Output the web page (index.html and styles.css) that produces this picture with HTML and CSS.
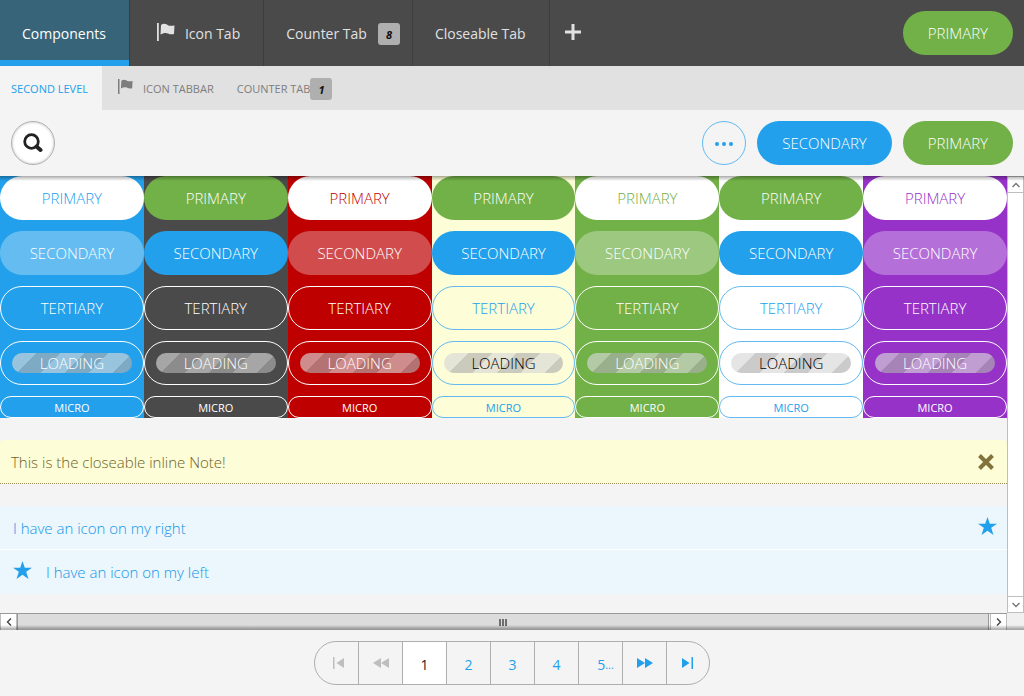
FILE: index.html
```html
<!DOCTYPE html>
<html lang="en">
<head>
<meta charset="utf-8">
<title>Components</title>
<link rel="stylesheet" href="styles.css">
</head>
<body>
<svg class="defs" aria-hidden="true">
  <symbol id="flag" viewBox="0 0 18 18"><path d="M0 0h1.800v18H0zM4 2C6 .5 8 .5 10 1.500 11 3 13 3 17.500 2.500L17 11c-2 .5-4 .5-6-.5-2-1-5-.5-7.500 1z"/></symbol>
  <symbol id="star" viewBox="0 0 20 19"><path d="M10 0l2.400 7H20l-6.100 4.400L16.300 19 10 14.500 3.700 19l2.400-7.600L0 7h7.600z"/></symbol>
  <symbol id="chevron" viewBox="0 0 8 8"><path d="M.5 6L4 2.500 7.500 6" fill="none" stroke="currentColor" stroke-width="1.400"/></symbol>
</svg>
<header class="topbar">
  <nav class="tabs">
    <a class="tab active" href="#components">Components</a>
    <a class="tab with-icon" href="#icon"><svg class="flag"><use href="#flag"/></svg>Icon Tab</a>
    <a class="tab with-count" href="#counter">Counter Tab<span class="count">8</span></a>
    <a class="tab" href="#closeable">Closeable Tab</a>
    <button class="add" aria-label="Add tab"><svg viewBox="0 0 16 16"><path d="M6.500 0h3v6.500H16v3H9.500V16h-3V9.500H0v-3h6.500z"/></svg></button>
  </nav>
  <button class="btn primary">PRIMARY</button>
</header>
<nav class="subtabs">
  <a class="subtab active" href="#second">SECOND LEVEL</a>
  <a class="subtab" href="#tabbar"><svg class="flag"><use href="#flag"/></svg>ICON TABBAR</a>
  <a class="subtab" href="#subcounter">COUNTER TAB<span class="count">1</span></a>
</nav>
<div class="toolbar">
  <button class="search" aria-label="Search"><svg viewBox="0 0 20 20"><circle cx="8.500" cy="8.500" r="6.800" fill="none" stroke="#222" stroke-width="2.800"/><path d="M13.500 13.500l4 3.500" stroke="#222" stroke-width="4" stroke-linecap="round"/></svg></button>
  <div class="actions">
    <button class="more" aria-label="More"><svg viewBox="0 0 18 4"><circle cx="2" cy="2" r="2"/><circle cx="9" cy="2" r="2"/><circle cx="16" cy="2" r="2"/></svg></button>
    <button class="btn secondary">SECONDARY</button>
    <button class="btn primary">PRIMARY</button>
  </div>
</div>
<div class="viewport">
  <main class="content">
    <div class="columns">
      <section class="column tinted blue"><button class="btn primary">PRIMARY</button><button class="btn secondary">SECONDARY</button><button class="btn tertiary">TERTIARY</button><button class="btn tertiary loading"><span>LOADING</span></button><button class="btn tertiary micro">MICRO</button></section>
      <section class="column dark"><button class="btn primary">PRIMARY</button><button class="btn secondary">SECONDARY</button><button class="btn tertiary">TERTIARY</button><button class="btn tertiary loading"><span>LOADING</span></button><button class="btn tertiary micro">MICRO</button></section>
      <section class="column tinted red"><button class="btn primary">PRIMARY</button><button class="btn secondary">SECONDARY</button><button class="btn tertiary">TERTIARY</button><button class="btn tertiary loading"><span>LOADING</span></button><button class="btn tertiary micro">MICRO</button></section>
      <section class="column yellow"><button class="btn primary">PRIMARY</button><button class="btn secondary">SECONDARY</button><button class="btn tertiary">TERTIARY</button><button class="btn tertiary loading"><span>LOADING</span></button><button class="btn tertiary micro">MICRO</button></section>
      <section class="column tinted green"><button class="btn primary">PRIMARY</button><button class="btn secondary">SECONDARY</button><button class="btn tertiary">TERTIARY</button><button class="btn tertiary loading"><span>LOADING</span></button><button class="btn tertiary micro">MICRO</button></section>
      <section class="column white"><button class="btn primary">PRIMARY</button><button class="btn secondary">SECONDARY</button><button class="btn tertiary">TERTIARY</button><button class="btn tertiary loading"><span>LOADING</span></button><button class="btn tertiary micro">MICRO</button></section>
      <section class="column tinted purple"><button class="btn primary">PRIMARY</button><button class="btn secondary">SECONDARY</button><button class="btn tertiary">TERTIARY</button><button class="btn tertiary loading"><span>LOADING</span></button><button class="btn tertiary micro">MICRO</button></section>
    </div>
    <div class="note">
      <p>This is the closeable inline Note!</p>
      <button class="close" aria-label="Close"><svg viewBox="0 0 16 16"><path d="M1.500 1.500l13 13M14.500 1.500l-13 13" stroke="currentColor" stroke-width="4"/></svg></button>
    </div>
    <div class="links">
      <a href="#right">I have an icon on my right<svg class="star end"><use href="#star"/></svg></a>
      <a href="#left"><svg class="star"><use href="#star"/></svg>I have an icon on my left</a>
    </div>
  </main>
  <div class="vbar">
    <button aria-label="Scroll up"><svg><use href="#chevron"/></svg></button>
    <button aria-label="Scroll down"><svg class="down"><use href="#chevron"/></svg></button>
  </div>
  <div class="hbar">
    <button aria-label="Scroll left"><svg class="left"><use href="#chevron"/></svg></button>
    <div class="thumb"><i></i><i></i><i></i></div>
    <button aria-label="Scroll right"><svg class="right"><use href="#chevron"/></svg></button>
  </div>
  <div class="corner"></div>
</div>
<footer class="footer">
  <nav class="pager">
    <button disabled aria-label="First"><svg viewBox="0 0 11 12"><path d="M0 0h1.500v12H0zM11 1v10L3.500 6z"/></svg></button>
    <button disabled aria-label="Back"><svg class="wide" viewBox="0 0 16 12"><path d="M8 1v10L0 6zM16 1v10L8 6z"/></svg></button>
    <button class="current">1</button>
    <button>2</button>
    <button>3</button>
    <button>4</button>
    <button class="last">5<small>...</small></button>
    <button aria-label="Forward"><svg class="wide" viewBox="0 0 16 12"><path d="M0 1v10l8-5zM8 1v10l8-5z"/></svg></button>
    <button aria-label="Last"><svg viewBox="0 0 11 12"><path d="M9.500 0H11v12H9.500zM0 1v10l7.500-5z"/></svg></button>
  </nav>
</footer>
</body>
</html>
```

FILE: styles.css
```css
* { box-sizing: border-box; }

body {
  margin: 0;
  height: 100vh;
  display: flex;
  flex-direction: column;
  background: #f4f4f4;
  font: 300 15px/22px "Open Sans", "Noto Sans", sans-serif;
}

button { font: inherit; margin: 0; padding: 0; border: 0; background: none; cursor: pointer; }
a { text-decoration: none; }
p { margin: 0; }
svg { display: block; fill: currentColor; flex: none; }
.defs { position: absolute; width: 0; height: 0; }

.topbar {
  flex: none;
  display: flex;
  align-items: center;
  justify-content: space-between;
  height: 66px;
  padding-right: 11px;
  background: #4a4a4a;
}
.tabs { display: flex; height: 66px; font-size: 14px; line-height: 24px; font-weight: 400; }
.tab {
  display: flex;
  align-items: center;
  padding: 2px 23px 0 22px;
  border-right: 1px solid #3d3d3d;
  color: #e1e1e1;
}
.tab.active { color: #fff; background: #376478; box-shadow: inset 0 -6px #22a0eb; }
.tab.with-icon { padding-left: 27px; }
.flag { width: 18px; height: 18px; margin: 0 10px 4px 0; }
.tab.with-count { padding-right: 12px; }
.count {
  width: 22px;
  height: 22px;
  margin-left: 11px;
  border-radius: 3px;
  background: #afafaf;
  color: #111;
  font-size: 11px;
  line-height: 24px;
  font-weight: 700;
  font-style: italic;
  text-align: center;
}
.add { padding: 0 15px 2px; color: #e1e1e1; }
.add svg { width: 16px; height: 16px; }

.btn {
  height: 44px;
  padding: 0 25px;
  border-radius: 22px;
  color: #fff;
}
.primary { background: #72b048; }
.secondary { background: #22a0eb; }

.subtabs { flex: none; display: flex; height: 44px; background: #e1e1e1; font-size: 11px; line-height: 24px; font-weight: 400; }
.subtab { display: flex; align-items: center; padding: 2px 12px 0 11px; color: #7d7d7d; }
.subtab.active { padding-right: 14px; background: #f4f4f4; color: #22a0eb; }
.subtab .flag { width: 15px; height: 15px; margin: 0 10px 6px 5px; }
.subtab .count { margin-left: 0; }

.toolbar { flex: none; display: flex; align-items: center; justify-content: space-between; height: 66px; padding: 0 11px; }
.actions { display: flex; gap: 11px; }
.search, .more { display: grid; place-items: center; width: 44px; height: 44px; border-radius: 50%; }
.search { border: 1px solid #afafaf; background: #fff; box-shadow: inset 0 0 3px #bbb; }
.search svg { width: 20px; height: 20px; }
.more { padding-top: 2px; border: 1px solid #64b9f0; color: #22a0eb; }
.more svg { width: 18px; height: 4px; }

.viewport {
  position: relative;
  flex: 1;
  min-height: 0;
  display: grid;
  grid-template-columns: minmax(0, 1fr) 17px;
  grid-template-rows: minmax(0, 1fr) 17px;
}
.viewport::after {
  content: "";
  position: absolute;
  inset: 0;
  pointer-events: none;
  background:
    linear-gradient(rgba(0, 0, 0, .25), rgba(0, 0, 0, 0)) top / 100% 4px no-repeat,
    linear-gradient(rgba(0, 0, 0, 0), rgba(0, 0, 0, .3)) bottom / 100% 4px no-repeat;
  border: solid rgba(0, 0, 0, .3);
  border-width: 1px 0;
}
.content { overflow: hidden; }
.columns { display: grid; grid-template-columns: repeat(7, 1fr); }
.column { display: flex; flex-direction: column; gap: 11px; }
.column .btn { padding: 0; }
.tertiary { border: 1px solid #fff; }
.column .micro { height: 22px; padding-top: 1px; border-radius: 11px; font-size: 11px; font-weight: 400; line-height: 20px; }
.blue { background: #22a0eb; --tint: #22a0eb; }
.dark { background: #4a4a4a; }
.red { background: #be0000; --tint: #be0000; }
.yellow { background: #fdfdd7; }
.green { background: #72b048; --tint: #72b048; }
.white { background: #fff; }
.purple { background: #9632c8; --tint: #9632c8; }
.tinted .primary { background: #fff; color: var(--tint); }
.tinted .secondary { background: rgba(255, 255, 255, .3); }
.yellow .tertiary, .white .tertiary { border-color: #64b9f0; color: #22a0eb; }
.loading span {
  display: block;
  height: 20px;
  margin: 0 11px;
  border-radius: 10px;
  line-height: 20px;
  background: repeating-linear-gradient(135deg, rgba(215, 215, 215, .65) 0 17px, rgba(175, 175, 175, .65) 17px 34px);
}
.yellow .loading, .white .loading { color: #000; }

.note {
  display: flex;
  align-items: center;
  justify-content: space-between;
  height: 44px;
  margin: 22px 0;
  padding: 0 13px 0 11px;
  border-bottom: 1px dotted #9b8c5a;
  border-radius: 3px 3px 0 0;
  background: #fdfdd7;
  color: #6e5f28;
}
.close { color: #82733c; }
.close svg { width: 16px; height: 16px; }
.links { border-radius: 3px; background: #ebf6fd; }
.links a { display: flex; align-items: center; height: 44px; padding: 0 10px 0 13px; color: #1496e6; }
.links a:first-child { border-bottom: 1px solid #fff; }
.star { width: 19px; height: 18px; margin: 0 14px 4px 0; color: #22a0eb; }
.star.end { margin: 0 0 4px auto; }

.vbar { display: flex; flex-direction: column; justify-content: space-between; background: #fff; border: solid #bebebe; border-width: 0 1px; }
.vbar button { display: grid; place-items: center; height: 17px; border: solid #bebebe; border-width: 1px 0; background: #fff; color: #777; }
.vbar svg, .hbar svg { width: 8px; height: 8px; }
.hbar { display: flex; border-top: 1px solid #999; }
.hbar button { display: grid; place-items: center; width: 17px; border: solid #bebebe; border-width: 0 1px; background: #fff; color: #444; }
.thumb { flex: 1; display: flex; align-items: center; justify-content: center; gap: 1px; margin-right: 1px; border-right: 1px solid #999; border-left: 1px solid #999; background: #dcdcdc; }
.thumb i { width: 2px; height: 7px; background: #6e6e6e; }
.corner { background: #f0f0f0; }
.down { transform: rotate(180deg); }
.left { transform: rotate(-90deg); }
.right { transform: rotate(90deg); }

.footer { flex: none; display: flex; align-items: center; justify-content: center; height: 66px; }
.pager { display: flex; height: 44px; border: 1px solid #afafaf; border-radius: 22px; overflow: hidden; font-size: 14px; font-weight: 400; }
.pager button { display: grid; place-items: center; width: 44px; padding-top: 3px; border-right: 1px solid #afafaf; color: #22a0eb; }
.pager button:last-child { width: 42px; padding-right: 2px; border: 0; }
.pager button:first-child { padding-left: 3px; }
.pager button:disabled { color: #bebebe; }
.pager .current { background: #fff; color: #222; }
.pager .last { display: flex; align-items: center; justify-content: center; padding-left: 10px; }
.pager small { font-size: 11px; }
.pager svg { width: 11px; height: 12px; margin-bottom: 3px; }
.pager .wide { width: 16px; }
```
